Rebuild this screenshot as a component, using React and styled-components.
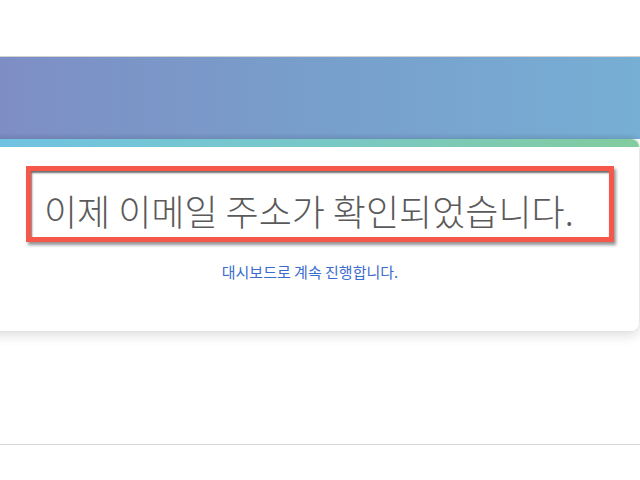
import React from 'react'
import styled, { createGlobalStyle } from 'styled-components'

const GlobalStyle = createGlobalStyle`
  html, body {
    margin: 0;
    padding: 0;
    background: #ffffff;
    overflow: hidden;
  }
  body {
    font-family: "Noto Sans CJK KR", "Noto Sans", sans-serif;
  }
`

const Page = styled.div`
  width: 640px;
  height: 480px;
  overflow: hidden;
  display: flex;
  flex-direction: column;
`

const TopSpace = styled.div`
  height: 56px;
  flex-shrink: 0;
`

const Hero = styled.div`
  height: 82px;
  flex-shrink: 0;
  border-top: 1px solid #d2d2d2;
  background: linear-gradient(90deg, #7e8ec4 0%, #789fcc 50%, #77aed4 100%);
`

const Card = styled.section`
  width: 658px;
  margin-left: -19px;
  flex-shrink: 0;
  background: #ffffff;
  border-radius: 0 8px 8px 8px;
  overflow: hidden;
  box-shadow: 0 -2px 5px rgba(0, 0, 0, 0.1), 0 5px 12px rgba(0, 0, 0, 0.12);
`

const CardBar = styled.div`
  height: 8px;
  background: linear-gradient(90deg, #70c2e4 0%, #78c8c8 50%, #82cc9e 100%);
`

const CardBody = styled.div`
  height: 184px;
  box-sizing: border-box;
  padding-top: 19px;
  display: flex;
  flex-direction: column;
`

const Highlight = styled.div`
  margin: 0 25px 0 45px;
  height: 76px;
  box-sizing: border-box;
  border: 5px solid #f5574b;
  box-shadow: inset 1px 2px 2px rgba(60, 60, 60, 0.75), 2px 3px 3px rgba(60, 60, 60, 0.55);
  display: flex;
  align-items: flex-end;
  padding: 0 0 1px 13px;
`

const Heading = styled.h1`
  margin: 0;
  font-weight: 300;
  font-size: 36px;
  line-height: 52px;
  color: #5a5a5a;
  white-space: nowrap;
`

const Link = styled.a`
  margin-top: 19px;
  align-self: center;
  font-size: 15px;
  line-height: 22px;
  color: #3a6ccf;
  text-decoration: none;
`

const Footer = styled.div`
  margin-top: 113px;
  border-top: 1px solid #d6d6d6;
  flex-shrink: 0;
`

export default function App() {
  return (
    <Page>
      <GlobalStyle />
      <TopSpace />
      <Hero />
      <Card>
        <CardBar />
        <CardBody>
          <Highlight>
            <Heading>이제 이메일 주소가 확인되었습니다.</Heading>
          </Highlight>
          <Link href="#">대시보드로 계속 진행합니다.</Link>
        </CardBody>
      </Card>
      <Footer />
    </Page>
  )
}
